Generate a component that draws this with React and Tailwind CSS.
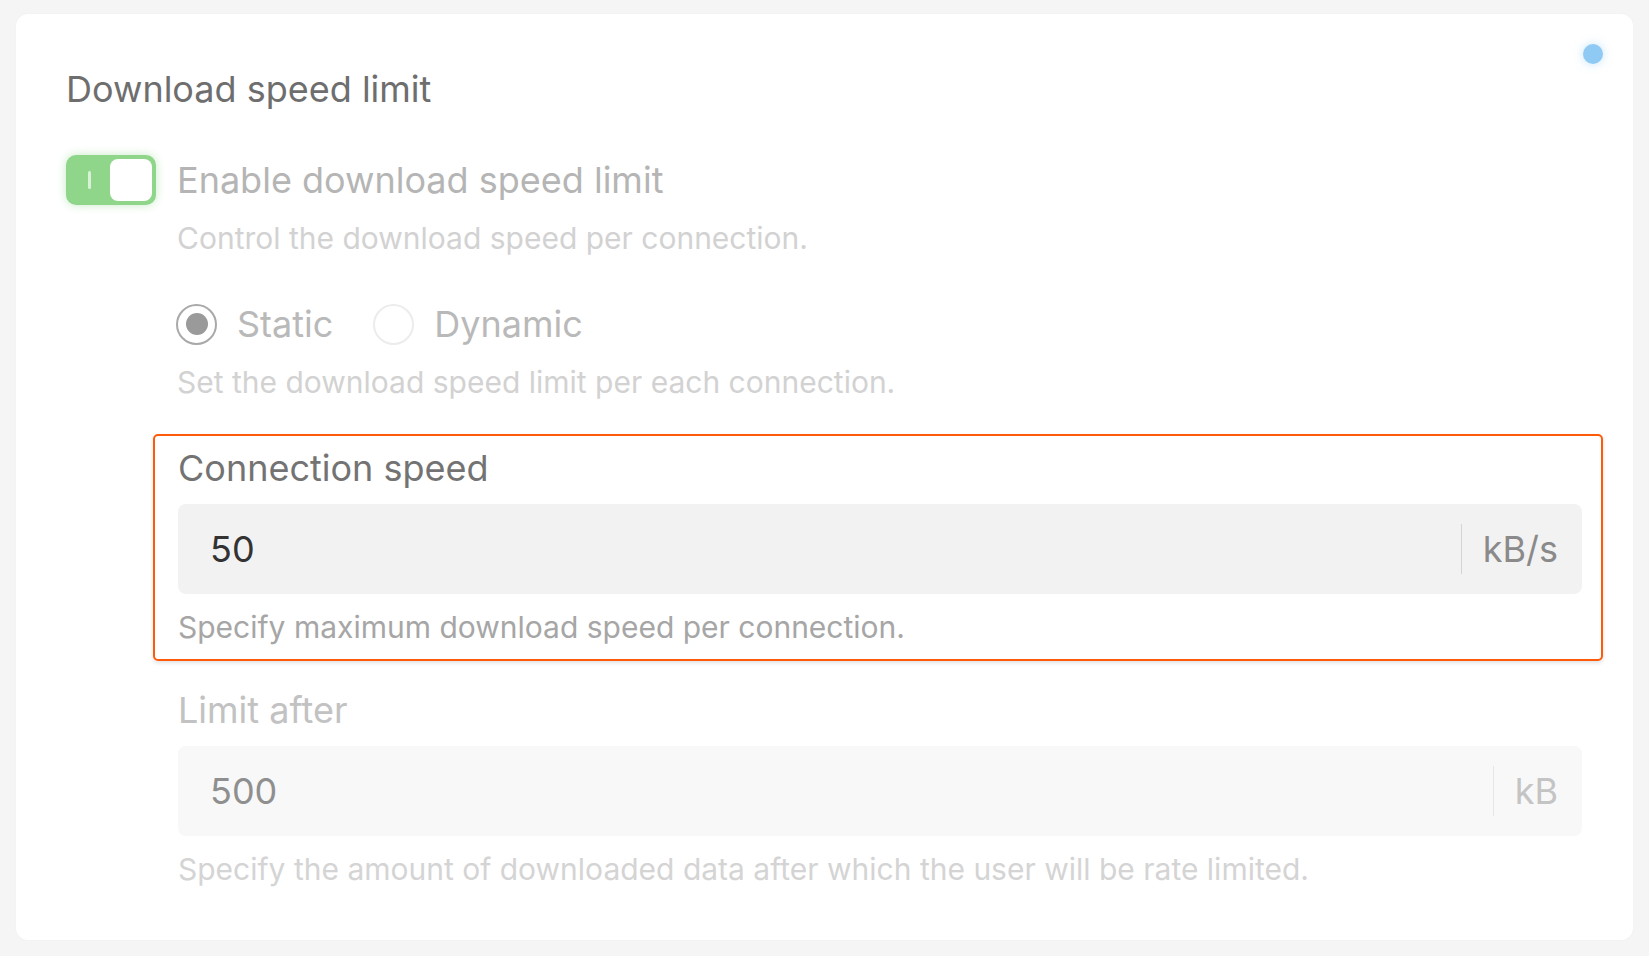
const font = { fontFamily: 'Inter, "Noto Sans", sans-serif' };

const Toggle = () => (
  <div className="relative flex h-[50px] w-[90px] shrink-0 items-center justify-end rounded-[10px] bg-[#8fd68b] p-[4px] shadow-[0_0_10px_rgba(130,210,130,0.45)]">
    <span className="absolute left-[22px] top-[16px] h-[18px] w-[3px] rounded-full bg-[#d8f2d6]" />
    <span className="h-[42px] w-[42px] rounded-[8px] bg-white" />
  </div>
);

const Radio = ({ checked, label }) => (
  <label className="flex items-center gap-[20px]">
    <span
      className={`flex h-[41px] w-[41px] items-center justify-center rounded-full border-2 ${
        checked ? 'border-[#a9a9a9]' : 'border-[#ececec]'
      }`}
    >
      {checked && <span className="h-[22px] w-[22px] rounded-full bg-[#9a9a9a]" />}
    </span>
    <span className="text-[36px] leading-[44px] text-[#b9b9b9]">{label}</span>
  </label>
);

const Field = ({ label, value, unit, hint, active }) => (
  <div
    className={`rounded-[5px] border-2 pb-[14px] pl-[23px] pr-[19px] pt-[10px] ${
      active ? 'border-[#ff5a0a] shadow-[0_2px_4px_rgba(0,0,0,0.12)]' : 'border-transparent'
    }`}
  >
    <div className={`text-[36px] leading-[44px] ${active ? 'text-[#737373]' : 'text-[#c2c2c2]'}`}>{label}</div>
    <div
      className={`mt-[14px] flex h-[90px] items-center rounded-[8px] pl-[32px] pr-[24px] ${
        active ? 'bg-[#f3f2f3]' : 'bg-[#f8f8f8]'
      }`}
    >
      <span className={`flex-1 text-[36px] ${active ? 'text-[#333333]' : 'text-[#8f8f8f]'}`}>{value}</span>
      <span className={`mr-[21px] h-[50px] w-px ${active ? 'bg-[#d4d4d4]' : 'bg-[#e6e6e6]'}`} />
      <span className={`text-[36px] ${active ? 'text-[#8a8a8a]' : 'text-[#c4c4c4]'}`}>{unit}</span>
    </div>
    <div className={`mt-[15px] text-[30px] leading-[36px] ${active ? 'text-[#a6a6a6]' : 'text-[#d4d4d4]'}`}>{hint}</div>
  </div>
);

export default function App() {
  return (
    <div className="min-h-screen bg-[#f5f5f5] pl-[16px] pr-[16px] pt-[14px]" style={font}>
      <div className="relative h-[926px] rounded-[12px] bg-white pl-[50px] pr-[30px] pt-[53px] shadow-[0_0_2px_rgba(0,0,0,0.04)]">
        <span className="absolute right-[30px] top-[30px] h-[20px] w-[20px] rounded-full bg-[#8fcaf5] shadow-[0_0_10px_rgba(143,202,245,0.5)]" />
        <h2 className="text-[36px] leading-[44px] text-[#6e6e6e]">Download speed limit</h2>

        <div className="mt-[44px] flex items-center gap-[21px]">
          <Toggle />
          <span className="text-[36px] leading-[44px] text-[#b5b5b5]">Enable download speed limit</span>
        </div>
        <div className="ml-[111px] mt-[15px] text-[30px] leading-[36px] text-[#d2d2d2]">
          Control the download speed per connection.
        </div>

        <div className="ml-[110px] mt-[46px] flex items-center gap-[40px]">
          <Radio checked label="Static" />
          <Radio label="Dynamic" />
        </div>
        <div className="ml-[111px] mt-[18px] text-[30px] leading-[36px] text-[#d2d2d2]">
          Set the download speed limit per each connection.
        </div>

        <div className="ml-[87px] mt-[34px] flex flex-col gap-[15px]">
          <Field active label="Connection speed" value="50" unit="kB/s" hint="Specify maximum download speed per connection." />
          <Field
            label="Limit after"
            value="500"
            unit="kB"
            hint="Specify the amount of downloaded data after which the user will be rate limited."
          />
        </div>
      </div>
    </div>
  );
}
